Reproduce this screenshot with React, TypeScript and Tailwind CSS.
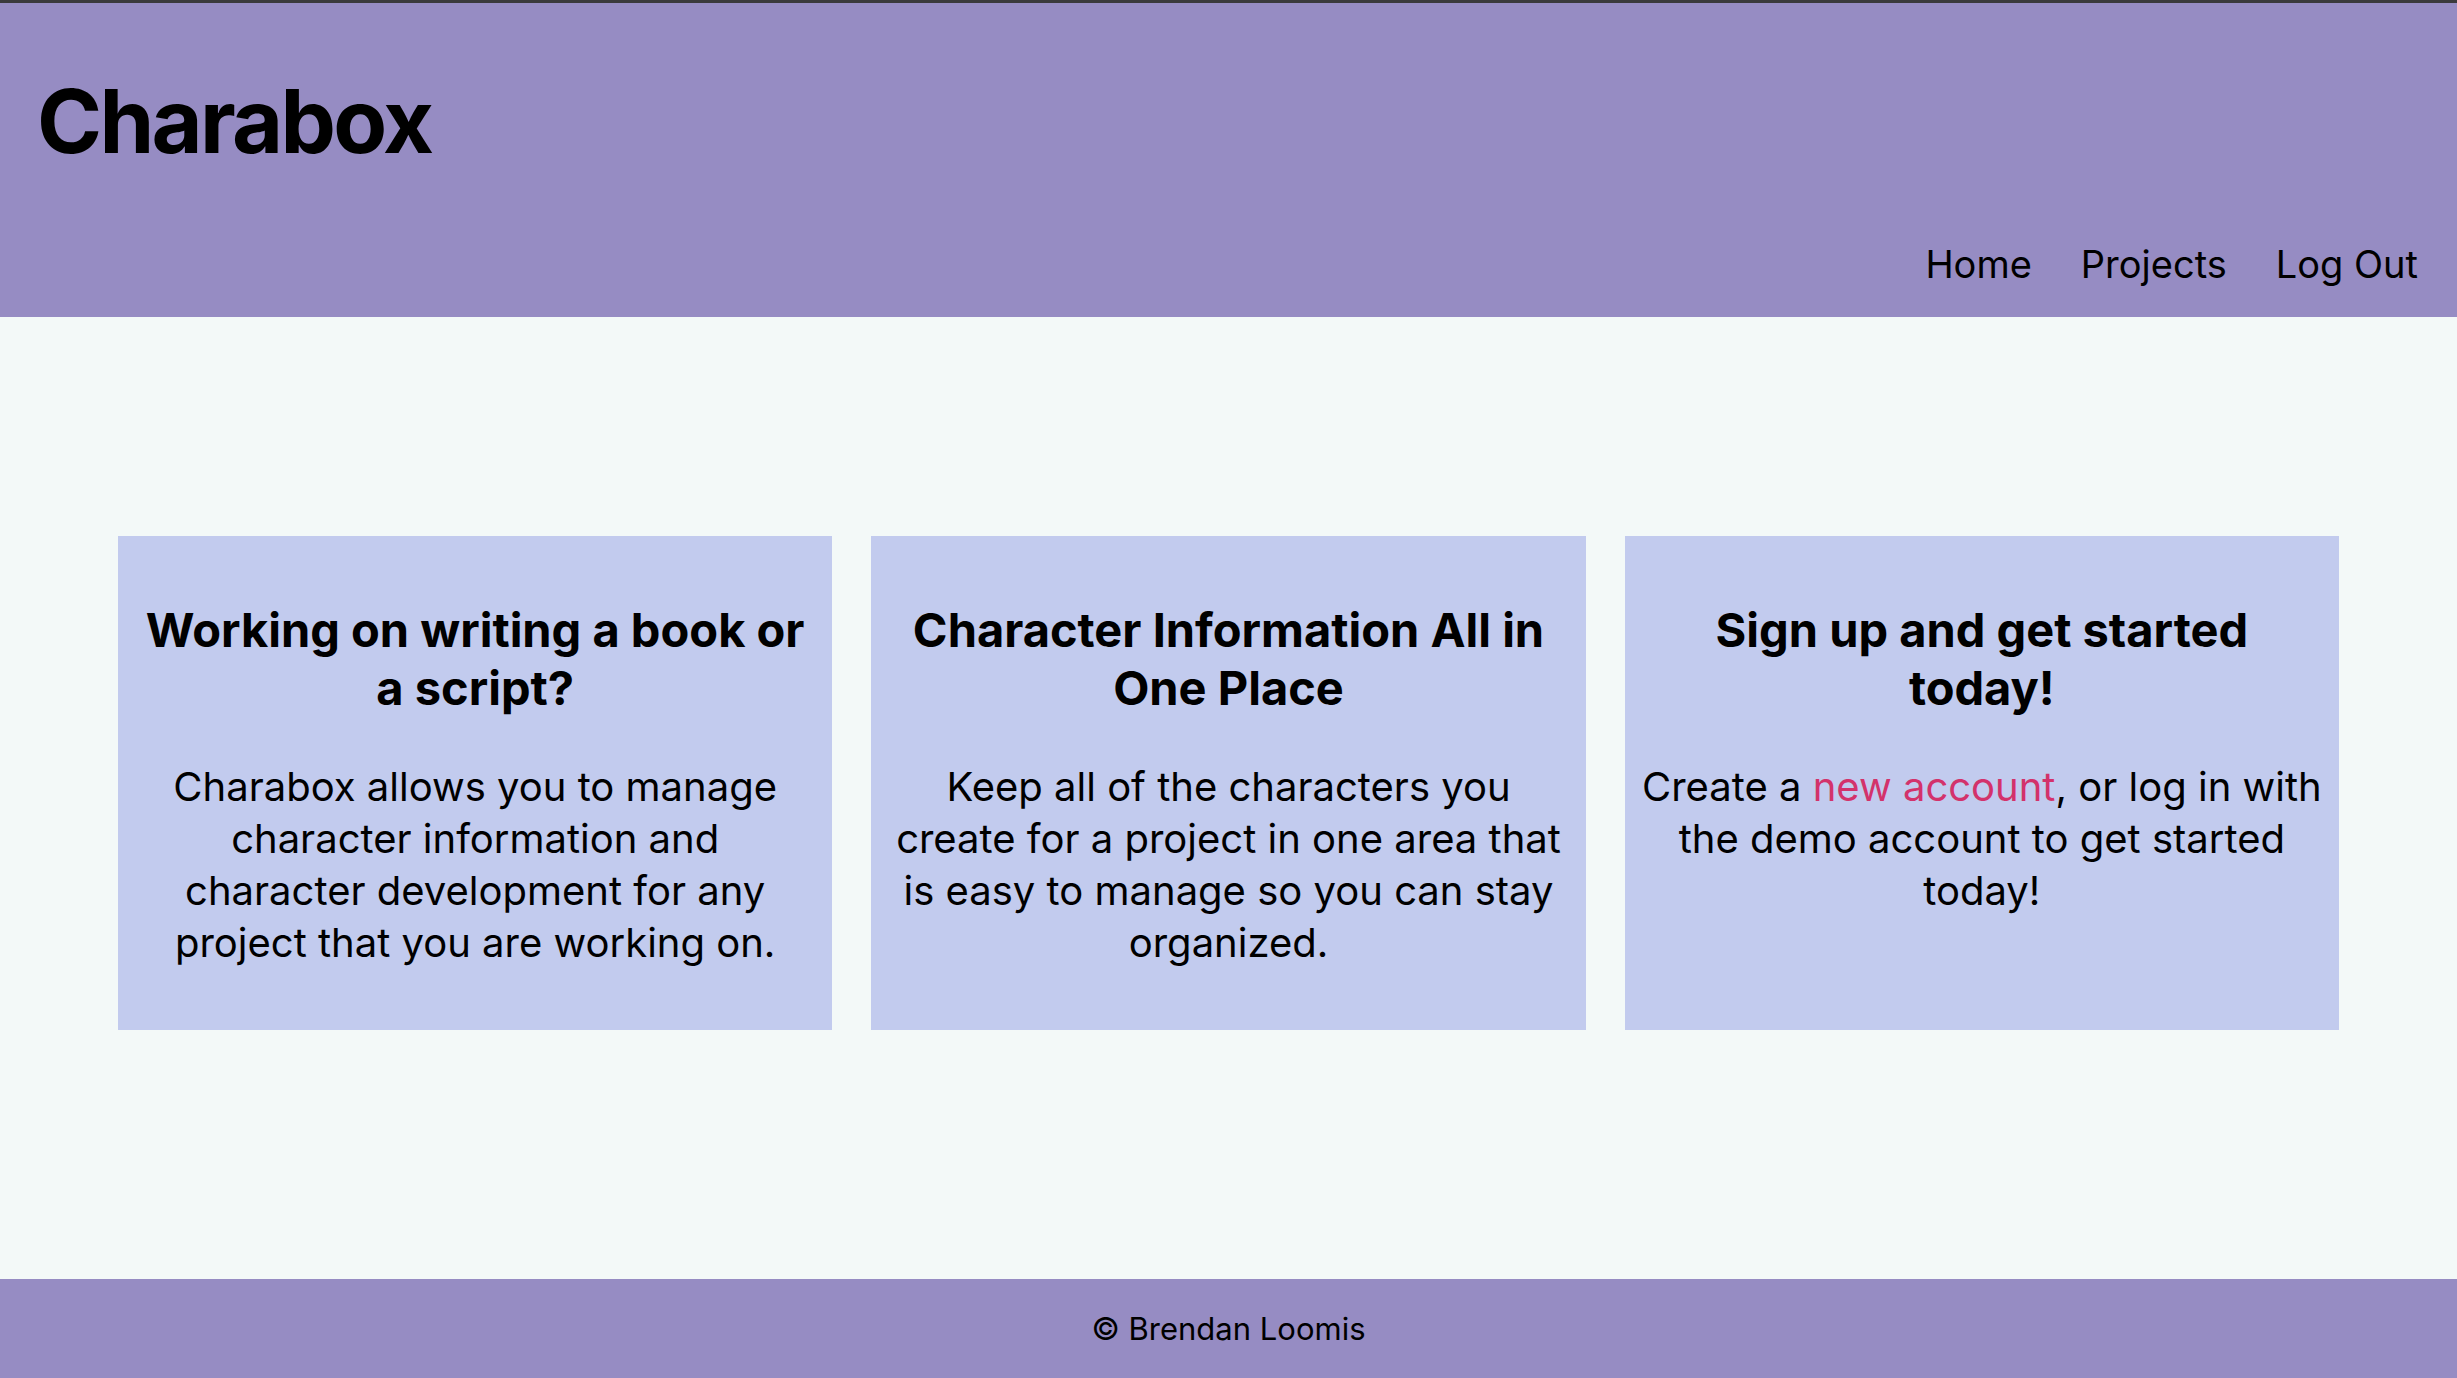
import React from 'react';

interface Feature {
    title: string;
    body: React.ReactNode;
}

const features: Feature[] = [
    {
        title: 'Working on writing a book or a script?',
        body: (
            <>
                Charabox allows you to manage character information and
                <br />
                character development for any project that you are working on.
            </>
        ),
    },
    {
        title: 'Character Information All in One Place',
        body: 'Keep all of the characters you create for a project in one area that is easy to manage so you can stay organized.',
    },
    {
        title: 'Sign up and get started today!',
        body: (
            <>
                Create a{' '}
                <a href="#" className="text-[#d3326b]">
                    new account
                </a>
                , or log in with the demo account to get started today!
            </>
        ),
    },
];

const NavBar: React.FC = () => (
    <header className="h-[317px] flex flex-col justify-between bg-[#968cc3] border-t-[3px] border-[#3a3a3c] pl-[37px] pr-[39px] pt-[74px] pb-[29px]">
        <h1 className="text-[88px] leading-[88px] font-bold tracking-[-0.03em] text-black">Charabox</h1>
        <nav className="flex justify-end gap-[49px] text-[38px] leading-[48px] text-black">
            <a href="#">Home</a>
            <a href="#">Projects</a>
            <a href="#">Log Out</a>
        </nav>
    </header>
);

export default function App() {
    return (
        <div className="min-h-screen flex flex-col bg-[#f3f9f8] font-['Inter',sans-serif]">
            <NavBar />

            {/* Feature cards */}
            <main className="flex-1 px-[118px] pt-[219px]">
                <div className="grid grid-cols-3 gap-[39px]">
                    {features.map((f, idx) => (
                        <div key={idx} className="bg-[#c2cbee] px-[14px] pt-[65px] pb-[61px] text-center text-black">
                            <h2 className="px-[12px] text-[47px] leading-[58px] font-bold">{f.title}</h2>
                            <p className="mt-[44px] text-[40px] leading-[52px]">{f.body}</p>
                        </div>
                    ))}
                </div>
            </main>

            <footer className="h-[99px] flex items-center justify-center bg-[#968cc3] text-[31px] leading-[40px] text-black">
                © Brendan Loomis
            </footer>
        </div>
    );
}
